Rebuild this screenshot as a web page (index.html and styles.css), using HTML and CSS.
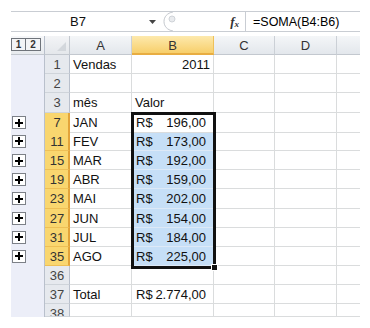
FILE: index.html
```html
<!DOCTYPE html>
<html lang="pt">
<head>
  <meta charset="UTF-8">
  <title>Planilha - Vendas</title>
  <link rel="stylesheet" href="styles.css">
</head>
<body>

  <div class="sheet">
    <!-- Formula bar -->
    <div class="formula-bar">
      <div class="name-box">B7</div>
      <div class="name-arrow">
        <svg width="8" height="5" viewBox="0 0 8 5"><path d="M0 0 H7 L3.5 4 Z" fill="#444"/></svg>
      </div>
      <div class="knob">
        <svg width="20" height="21" viewBox="0 0 20 21">
          <path d="M12 1 C6 2 3 6 3 10.5 C3 15 6 19 12 20" fill="none" stroke="#c3c7cd"/>
          <circle cx="11" cy="8" r="3" fill="#e9ebee" stroke="#cfd3d8"/>
        </svg>
      </div>
      <div class="fx"><span class="fx-f">f</span><span class="fx-x">x</span></div>
      <div class="formula">=SOMA(B4:B6)</div>
    </div>

    <!-- Grid -->
    <div class="grid">
      <div class="row head">
        <div class="gutter levels"><span class="level">1</span><span class="level">2</span></div>
        <div class="corner"></div>
        <div class="col-head">A</div>
        <div class="col-head active">B</div>
        <div class="col-head">C</div>
        <div class="col-head">D</div>
        <div class="col-head last"></div>
      </div>

      <div class="row">
        <div class="gutter"></div>
        <div class="row-head">1</div>
        <div class="cell">Vendas</div>
        <div class="cell num">2011</div>
        <div class="cell"></div><div class="cell"></div><div class="cell"></div>
      </div>
      <div class="row">
        <div class="gutter"></div>
        <div class="row-head">2</div>
        <div class="cell"></div><div class="cell"></div>
        <div class="cell"></div><div class="cell"></div><div class="cell"></div>
      </div>
      <div class="row">
        <div class="gutter"></div>
        <div class="row-head">3</div>
        <div class="cell">mês</div>
        <div class="cell">Valor</div>
        <div class="cell"></div><div class="cell"></div><div class="cell"></div>
      </div>

      <div class="row">
        <div class="gutter"><span class="expand"></span></div>
        <div class="row-head active">7</div>
        <div class="cell">JAN</div>
        <div class="cell money current">
          <span>R$</span><span>196,00</span>
          <div class="selection"><span class="fill-handle"></span></div>
        </div>
        <div class="cell"></div><div class="cell"></div><div class="cell"></div>
      </div>
      <div class="row">
        <div class="gutter"><span class="expand"></span></div>
        <div class="row-head active">11</div>
        <div class="cell">FEV</div>
        <div class="cell money sel"><span>R$</span><span>173,00</span></div>
        <div class="cell"></div><div class="cell"></div><div class="cell"></div>
      </div>
      <div class="row">
        <div class="gutter"><span class="expand"></span></div>
        <div class="row-head active">15</div>
        <div class="cell">MAR</div>
        <div class="cell money sel"><span>R$</span><span>192,00</span></div>
        <div class="cell"></div><div class="cell"></div><div class="cell"></div>
      </div>
      <div class="row">
        <div class="gutter"><span class="expand"></span></div>
        <div class="row-head active">19</div>
        <div class="cell">ABR</div>
        <div class="cell money sel"><span>R$</span><span>159,00</span></div>
        <div class="cell"></div><div class="cell"></div><div class="cell"></div>
      </div>
      <div class="row">
        <div class="gutter"><span class="expand"></span></div>
        <div class="row-head active">23</div>
        <div class="cell">MAI</div>
        <div class="cell money sel"><span>R$</span><span>202,00</span></div>
        <div class="cell"></div><div class="cell"></div><div class="cell"></div>
      </div>
      <div class="row">
        <div class="gutter"><span class="expand"></span></div>
        <div class="row-head active">27</div>
        <div class="cell">JUN</div>
        <div class="cell money sel"><span>R$</span><span>154,00</span></div>
        <div class="cell"></div><div class="cell"></div><div class="cell"></div>
      </div>
      <div class="row">
        <div class="gutter"><span class="expand"></span></div>
        <div class="row-head active">31</div>
        <div class="cell">JUL</div>
        <div class="cell money sel"><span>R$</span><span>184,00</span></div>
        <div class="cell"></div><div class="cell"></div><div class="cell"></div>
      </div>
      <div class="row">
        <div class="gutter"><span class="expand"></span></div>
        <div class="row-head active">35</div>
        <div class="cell">AGO</div>
        <div class="cell money sel"><span>R$</span><span>225,00</span></div>
        <div class="cell"></div><div class="cell"></div><div class="cell"></div>
      </div>

      <div class="row">
        <div class="gutter"></div>
        <div class="row-head">36</div>
        <div class="cell"></div><div class="cell"></div>
        <div class="cell"></div><div class="cell"></div><div class="cell"></div>
      </div>
      <div class="row">
        <div class="gutter"></div>
        <div class="row-head">37</div>
        <div class="cell">Total</div>
        <div class="cell money"><span>R$</span><span>2.774,00</span></div>
        <div class="cell"></div><div class="cell"></div><div class="cell"></div>
      </div>
      <div class="row cut">
        <div class="gutter"></div>
        <div class="row-head">38</div>
        <div class="cell"></div><div class="cell"></div>
        <div class="cell"></div><div class="cell"></div><div class="cell"></div>
      </div>
    </div>
  </div>

</body>
</html>
```

FILE: styles.css
```css
body {
  margin: 0;
  background: #fff;
  font-family: 'Liberation Sans', Arial, sans-serif;
  font-size: 13px;
  color: #111;
}

.sheet {
  width: 349px;
  margin: 11px 0 0 11px;
}

/* Formula bar */
.formula-bar {
  display: flex;
  height: 21px;
  border-top: 1px solid #c9cdd3;
  border-bottom: 1px solid #c9cdd3;
  box-sizing: border-box;
  align-items: center;
  font-size: 12px;
}

.name-box {
  width: 134px;
  text-align: center;
  font-size: 13px;
  color: #111;
}

.name-arrow {
  width: 16px;
  display: flex;
  justify-content: center;
  padding-top: 2px;
}

.knob {
  width: 20px;
  height: 19px;
  overflow: hidden;
}

.knob svg {
  display: block;
  margin-top: -1px;
}

.fx {
  width: 65px;
  height: 19px;
  box-sizing: border-box;
  border-right: 1px solid #c9cdd3;
  text-align: right;
  padding-right: 6px;
  font-family: 'Liberation Serif', serif;
  font-style: italic;
  font-weight: bold;
  color: #333;
  line-height: 19px;
}

.fx-f {
  font-size: 13px;
}

.fx-x {
  font-size: 9px;
  position: relative;
  top: 1px;
}

.formula {
  flex: 1;
  padding-left: 7px;
  font-size: 12.5px;
  color: #000;
}

/* Grid */
.grid {
  margin-top: 4px;
}

.row {
  display: grid;
  grid-template-columns: 34px 25px 62px 82px 61px 62px 23px;
  height: 19.2px;
}

.row.head {
  height: 19px;
}

.row.cut {
  height: 13px;
  overflow: hidden;
}

.row > div {
  box-sizing: border-box;
  overflow: hidden;
  white-space: nowrap;
}

.gutter {
  background: #eceef8;
  border-right: 1px solid #b9c0cc;
  display: flex;
  align-items: center;
}

.levels {
  background: linear-gradient(#f6f7f9, #e7eaee);
  border-bottom: 1px solid #c3c8cf;
  align-items: flex-start;
  padding-top: 2px;
}

.level {
  width: 15px;
  height: 13px;
  box-sizing: border-box;
  border: 1px solid #6f747b;
  background: #f3f4f6;
  font-size: 10px;
  font-weight: bold;
  line-height: 11px;
  text-align: center;
  color: #333;
}

.level + .level {
  border-left: none;
}

/* Outline expand button, plus drawn with two bars */
.expand {
  width: 14px;
  height: 13px;
  margin-left: 1px;
  box-sizing: border-box;
  border: 1px solid #7c8087;
  background: #fff;
  position: relative;
}

.expand::before,
.expand::after {
  content: "";
  position: absolute;
  background: #000;
}

.expand::before {
  left: 2px;
  top: 4.5px;
  width: 8px;
  height: 2px;
}

.expand::after {
  left: 5px;
  top: 1.5px;
  width: 2px;
  height: 8px;
}

.corner {
  background: linear-gradient(#f3f4f6, #e4e7eb);
  border-right: 1px solid #c3c8cf;
  border-bottom: 1px solid #c3c8cf;
  position: relative;
}

.corner::after {
  content: "";
  position: absolute;
  right: 3px;
  bottom: 3px;
  border-left: 9px solid transparent;
  border-bottom: 9px solid #d3d7dc;
}

.col-head {
  background: linear-gradient(#f4f6f8, #e3e7ec);
  border-right: 1px solid #cbd0d6;
  border-bottom: 1px solid #c3c8cf;
  text-align: center;
  line-height: 19px;
  color: #333;
}

.col-head.active {
  background: linear-gradient(#fde9ad, #f7cf6b);
  border-right-color: #eec15a;
  border-bottom: 2px solid #e8ad42;
}

.col-head.last {
  border-right: none;
}

.row-head {
  background: #e6e9ee;
  border-right: 1px solid #b9c0cc;
  border-bottom: 1px solid #cfd4da;
  text-align: center;
  line-height: 19px;
  color: #444;
}

.row-head.active {
  background: #f9d66f;
  border-right: 2px solid #e3a43a;
  border-bottom-color: #eebf56;
  color: #333;
  padding-left: 1px;
}

.cell {
  border-right: 1px solid #dadcdd;
  border-bottom: 1px solid #dadcdd;
  padding: 1px 3px 0;
  line-height: 18px;
}

.cell:last-child {
  border-right: none;
}

.cell.num {
  text-align: right;
}

.cell.money {
  display: flex;
  justify-content: space-between;
  padding: 1px 7px 0 4px;
}

.cell.sel {
  background: #c6dff7;
  border-bottom-color: #dde9f7;
}

.cell.current {
  overflow: visible;
  position: relative;
}

/* Thick selection outline over B7:B35 */
.selection {
  position: absolute;
  top: -1px;
  left: -1px;
  width: 85px;
  height: 157px;
  box-sizing: border-box;
  border: 3px solid #111;
  pointer-events: none;
  z-index: 2;
}

.fill-handle {
  position: absolute;
  right: -5px;
  bottom: -5px;
  width: 5px;
  height: 5px;
  background: #111;
  border: 1px solid #fff;
}
```
